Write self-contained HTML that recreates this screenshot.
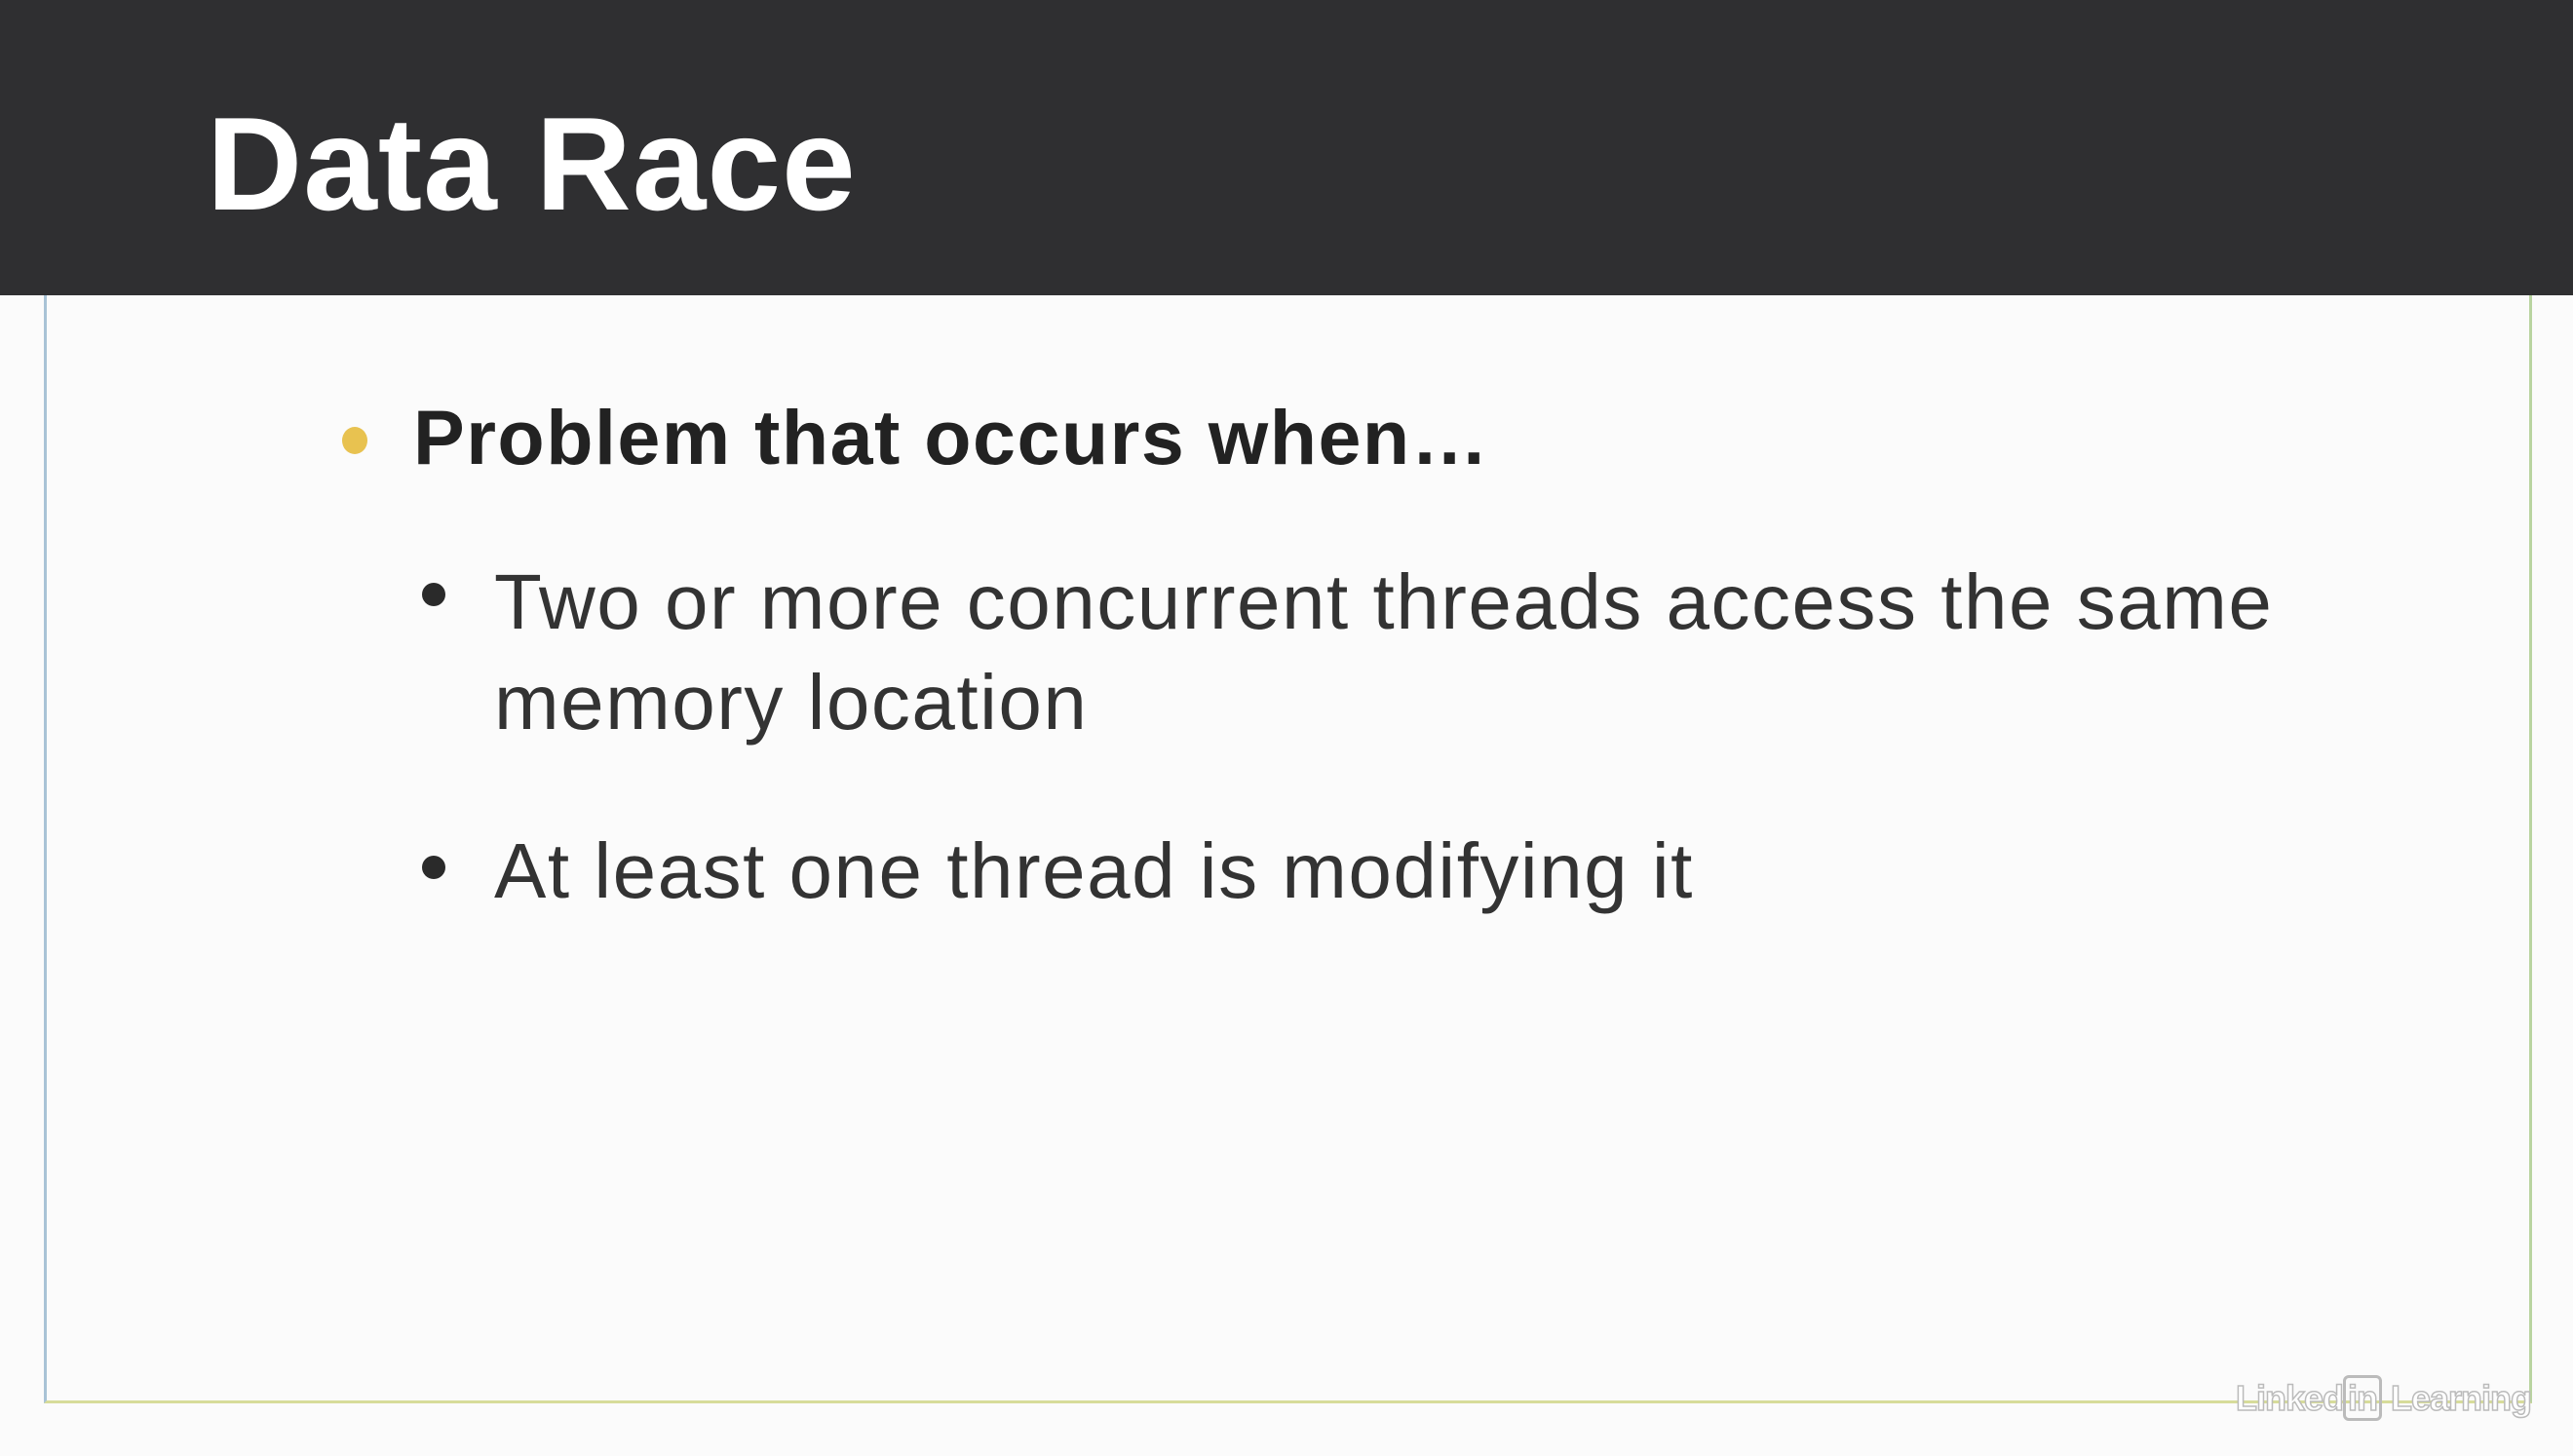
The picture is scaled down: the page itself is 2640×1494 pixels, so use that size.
<!DOCTYPE html>
<html><head><meta charset="utf-8"><style>
html,body{margin:0;padding:0}
body{width:2640px;height:1494px;position:relative;overflow:hidden;background:#fbfbfb;font-family:"Liberation Sans",sans-serif}
.hdr{position:absolute;left:0;top:0;width:2640px;height:303px;background:#2f2f31}
.title{position:absolute;left:212px;top:100px;font-size:136px;font-weight:bold;color:#fff;line-height:1;letter-spacing:1px}
.box{position:absolute;left:45px;top:303px;width:2553px;height:1137px;border-left:3px solid #a9c3d6;border-right:3px solid #b9d4a0;border-bottom:3px solid #d7dc9a;box-sizing:border-box}
.t{position:absolute;white-space:nowrap;line-height:1;color:#2a2a2a}
.b1{left:424px;top:409px;font-size:79px;font-weight:bold;color:#222;letter-spacing:1.5px}
.s{font-size:80px;color:#333;left:507px;letter-spacing:1.5px}
.dot{position:absolute;border-radius:50%}
.logo{position:absolute;left:2294px;top:1414px;font-size:36px;font-weight:bold;color:#fff;-webkit-text-stroke:1.5px #bbb;white-space:nowrap;letter-spacing:-1px}
.logo span{border:3px solid #bbb;border-radius:6px;padding:0 2px;color:#fff}
</style></head><body>
<div class="hdr"></div>
<div class="title">Data Race</div>
<div class="box"></div>
<div class="dot" style="left:351px;top:438px;width:26px;height:28px;background:#e8c250"></div>
<div class="t b1">Problem that occurs when…</div>
<div class="dot" style="left:433px;top:598px;width:24px;height:24px;background:#2a2a2a"></div>
<div class="t s" style="top:578px">Two or more concurrent threads access the same</div>
<div class="t s" style="top:681px">memory location</div>
<div class="dot" style="left:433px;top:878px;width:24px;height:24px;background:#2a2a2a"></div>
<div class="t s" style="top:854px">At least one thread is modifying it</div>
<div class="logo">Linked<span>in</span> Learning</div>
</body></html>
